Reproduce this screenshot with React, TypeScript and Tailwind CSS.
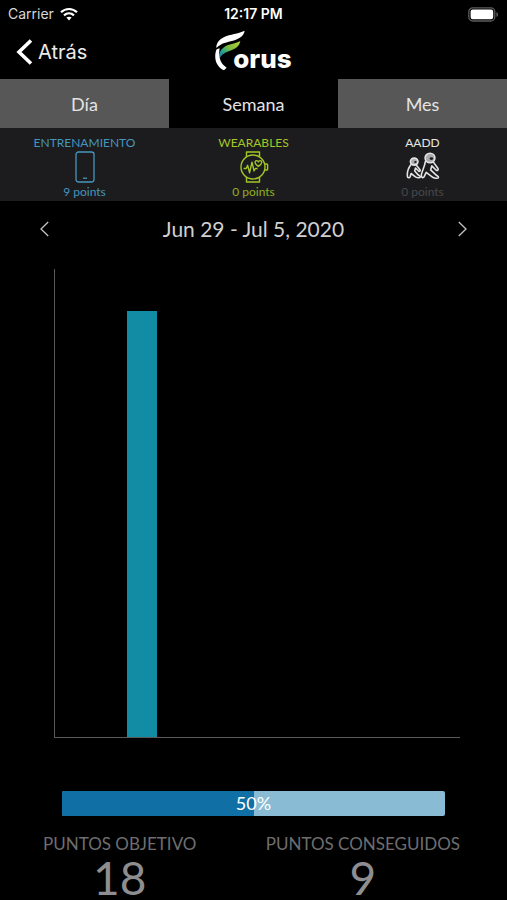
import React, { useState } from 'react';

type Tab = 'day' | 'week' | 'month';

const tabs: { id: Tab; label: string }[] = [
  { id: 'day', label: 'Día' },
  { id: 'week', label: 'Semana' },
  { id: 'month', label: 'Mes' },
];

const CHART_MAX = 100;
const days = [
  { day: 'Mon', value: 0 },
  { day: 'Tue', value: 91 },
  { day: 'Wed', value: 0 },
  { day: 'Thu', value: 0 },
  { day: 'Fri', value: 0 },
  { day: 'Sat', value: 0 },
  { day: 'Sun', value: 0 },
];

const goal = 18;
const earned = 9;

function WifiIcon() {
  return (
    <svg width="18" height="14" viewBox="0 0 18 14" fill="none" stroke="#fff" strokeWidth="2.2" aria-hidden="true">
      <path d="M1 5.2C5.6 .9 12.4 .9 17 5.2" />
      <path d="M4 8.4c2.9-2.6 7.1-2.6 10 0" />
      <path d="M6.4 10.6c1.5-1.3 3.7-1.3 5.2 0L9 13.4z" fill="#fff" stroke="none" />
    </svg>
  );
}

function BatteryIcon() {
  return (
    <svg width="31" height="15" viewBox="0 0 31 15" aria-hidden="true">
      <rect x=".8" y=".8" width="26" height="13.2" rx="4" fill="none" stroke="#5c5c5c" strokeWidth="1.3" />
      <rect x="2.6" y="2.6" width="22.6" height="9.6" rx="2.2" fill="#fff" />
      <path d="M28.4 5c2.2.7 2.2 4.2 0 4.9z" fill="#5c5c5c" />
    </svg>
  );
}

function Logo() {
  return (
    <div className="flex items-end" role="img" aria-label="Forus">
      <svg width="30" height="41" viewBox="0 0 90 123" className="-mr-3" aria-hidden="true">
        <defs>
          <linearGradient id="wing" x1="0" y1="1" x2="1" y2="0">
            <stop offset="0" stopColor="#1668b4" />
            <stop offset=".3" stopColor="#2ba48c" />
            <stop offset=".55" stopColor="#7dbb3c" />
            <stop offset="1" stopColor="#b5d334" />
          </linearGradient>
        </defs>
        <path d="M89 2C68 12 46 12 28 21 12 29 4 38 4 54 20 38 36 37 54 32 74 26 86 18 89 2z" fill="#fff" />
        <path d="M76 33C58 42 42 42 29 50 15 59 11 70 13 86 22 70 32 67 46 62 63 55 73 49 76 33z" fill="url(#wing)" />
        <path d="M5 58C-4 78 0 109 27 121l8-8C17 102 9 82 14 55z" fill="#fff" />
      </svg>
      <span className="font-['Inter'] text-[26px] leading-6 font-extrabold text-white">orus</span>
    </div>
  );
}

function PhoneIcon() {
  return (
    <svg width="20" height="32" viewBox="0 0 20 32" fill="none" stroke="currentColor" strokeWidth="1.3" aria-hidden="true">
      <rect x="1" y="1" width="18" height="30" rx="2.5" />
      <path d="M8 27.2h4" />
    </svg>
  );
}

function WatchIcon() {
  return (
    <svg width="30" height="32" viewBox="0 0 30 32" fill="none" stroke="currentColor" strokeWidth="1.4" strokeLinejoin="round" aria-hidden="true">
      <circle cx="14" cy="16" r="12" />
      <path d="M7.5 6V1h13v5M7.5 26v5h13v-5" />
      <path d="M25.8 13h2q.8 0 .8.8v4.4q0 .8-.8.8h-2" />
      <path d="M4.6 17.5h2.6l1.4-3.2 2 7.4 2.4-10.6 2 8.8 1.4-2.4h2.2" />
      <path d="M19.4 15.4c-2.4-1.6-3.8-3-3.2-4.7.6-1.4 2.5-1.4 3.2.2.7-1.6 2.6-1.6 3.2-.2.6 1.7-.8 3.1-3.2 4.7z" />
    </svg>
  );
}

function GroupIcon() {
  return (
    <svg width="34" height="32" viewBox="0 0 34 32" fill="none" stroke="currentColor" strokeWidth="1.6" strokeLinejoin="round" strokeLinecap="round" aria-hidden="true">
      <path d="M5 13.6C2.4 17 1 21.6 1.4 25.4c.2 1.7 2.2 1.7 2.7.3l1-3.2 4 3.1c1.5 1.2 4.6 1.7 5.2.5.5-1-1.5-1.5-2.6-2.7l-3-3.4.8-3 3.3 3.2c1.3.5 1.8-.6 1-1.7l-3.4-4.2" />
      <ellipse cx="8.2" cy="10.6" rx="3.8" ry="3.5" fill="#a9a9a9" />
      <ellipse cx="9.4" cy="11" rx="1.2" ry="1" fill="#1c1c1e" stroke="none" />
      <path d="M19.4 10.4c-.8 5.4-3 8.8-4 13-.6 3.4 2 4.2 3 1.8l1.8-3.8 5.6 4.2c2 1.6 6.2 2.4 6.7.9.4-1.3-2.1-1.7-3.3-3.3l-4.6-4.3 1.2-4 4.4 4.4c1.6.8 2.6-.6 1.6-2l-4.4-6.2" />
      <ellipse cx="24" cy="7" rx="4.9" ry="4.8" fill="#a9a9a9" />
      <ellipse cx="25.4" cy="7.6" rx="1.8" ry="1.4" fill="#1c1c1e" stroke="none" />
    </svg>
  );
}

const sources = [
  { name: 'ENTRENAMIENTO', points: 9, icon: <PhoneIcon />, color: 'text-[#4596bd]', pointsColor: 'text-[#4596bd]' },
  { name: 'WEARABLES', points: 0, icon: <WatchIcon />, color: 'text-[#a3c626]', pointsColor: 'text-[#91ae20]' },
  { name: 'AADD', points: 0, icon: <GroupIcon />, color: 'text-[#e4e4e4]', pointsColor: 'text-[#48484a]' },
];

export default function App() {
  const [tab, setTab] = useState<Tab>('week');
  const percent = Math.round((earned / goal) * 100);

  return (
    <div className="flex min-h-screen flex-col bg-black font-['Lato',sans-serif] text-white">
      {/* Status bar */}
      <div className="grid h-7 grid-cols-3 items-center px-2 font-['Inter'] text-sm">
        <div className="flex items-center gap-1.5 text-[#d8d8d8]">
          <span>Carrier</span>
          <WifiIcon />
        </div>
        <span className="text-center font-semibold">12:17 PM</span>
        <div className="flex justify-end">
          <BatteryIcon />
        </div>
      </div>

      {/* Header */}
      <header className="grid h-[51px] grid-cols-3 px-4">
        <button className="flex items-center gap-1 pb-1 font-['Inter'] text-xl text-[#ececec]">
          <svg width="18" height="26" viewBox="0 0 18 26" fill="none" stroke="#fff" strokeWidth="3.6" aria-hidden="true">
            <path d="M15 1.5 3 13l12 11.5" />
          </svg>
          Atrás
        </button>
        <div className="flex items-start justify-center pt-0.5">
          <Logo />
        </div>
      </header>

      {/* Range tabs */}
      <nav className="grid h-[49px] grid-cols-3">
        {tabs.map(t => (
          <button
            key={t.id}
            onClick={() => setTab(t.id)}
            aria-pressed={tab === t.id}
            className={`text-lg text-[#e4e4e4] ${tab === t.id ? 'bg-black' : 'bg-[#575757]'}`}
          >
            {t.label}
          </button>
        ))}
      </nav>

      {/* Points by source */}
      <section className="grid h-[73px] grid-cols-3 bg-[#1c1c1e] pt-1.5">
        {sources.map(s => (
          <div key={s.name} className={`flex flex-col items-center ${s.color}`}>
            <span className="text-xs leading-[17px]">{s.name}</span>
            {s.icon}
            <span className={`text-xs leading-[18px] ${s.pointsColor}`}>{s.points} points</span>
          </div>
        ))}
      </section>

      {/* Week picker */}
      <div className="flex h-14 items-center justify-between px-9">
        <button aria-label="Previous week" className="p-1">
          <svg width="9" height="16" viewBox="0 0 9 16" fill="none" stroke="#c4c4c4" strokeWidth="1.3" aria-hidden="true">
            <path d="M8.2 1 1 8l7.2 7" />
          </svg>
        </button>
        <h1 className="text-[21px] text-[#d0d0d0]">Jun 29 - Jul 5, 2020</h1>
        <button aria-label="Next week" className="p-1">
          <svg width="9" height="16" viewBox="0 0 9 16" fill="none" stroke="#c4c4c4" strokeWidth="1.3" aria-hidden="true">
            <path d="M.8 1 8 8l-7.2 7" />
          </svg>
        </button>
      </div>

      {/* Chart */}
      <div className="mt-3 mr-[47px] ml-[54px] grid min-h-80 flex-1 grid-cols-7 border-b border-l border-[#5a5a5a]">
        {days.map(d => (
          <div key={d.day} className="flex items-end justify-center">
            <div className="w-[30px] bg-[#128ba4]" style={{ height: `${(d.value / CHART_MAX) * 100}%` }} />
          </div>
        ))}
      </div>

      {/* Progress */}
      <div
        role="progressbar"
        aria-label="Puntos"
        aria-valuenow={percent}
        aria-valuemin={0}
        aria-valuemax={100}
        className="mx-[62px] mt-[53px] grid h-[25px] overflow-hidden rounded-xs bg-[#8abbd4]"
      >
        <div className="col-start-1 row-start-1 bg-[#106fa5]" style={{ width: `${percent}%` }} />
        <span className="col-start-1 row-start-1 text-center text-lg leading-6">{percent}%</span>
      </div>

      {/* Totals */}
      <footer className="flex justify-between pt-4 pr-[47px] pl-[43px] text-center">
        <div>
          <p className="text-[17px] leading-6 text-[#6e6e70]">PUNTOS OBJETIVO</p>
          <p className="text-[46px] leading-[44px] text-[#8e8e90]">{goal}</p>
        </div>
        <div>
          <p className="text-[17px] leading-6 text-[#6e6e70]">PUNTOS CONSEGUIDOS</p>
          <p className="text-[46px] leading-[44px] text-[#8e8e90]">{earned}</p>
        </div>
      </footer>
    </div>
  );
}
